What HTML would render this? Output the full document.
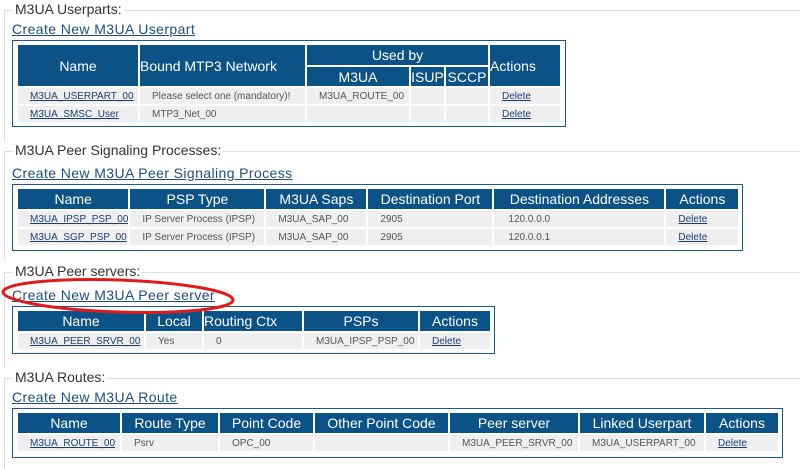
<!DOCTYPE html><html><head><style>
body{margin:0;width:800px;height:467px;background:#fff;position:relative;overflow:hidden;font-family:"Liberation Sans",sans-serif}
.fs{position:absolute;border-top:1px solid #ddd;border-left:1px solid #ddd;left:4px}
.lg{position:absolute;left:13px;font-size:14px;color:#333;background:#fff;padding:0 2px}
.cr{position:absolute;left:12px;font-size:14px;letter-spacing:0.4px;color:#1c4e86;text-decoration:underline}
.box{position:absolute;left:12px;border:1px solid #1b5a8e}
table{position:absolute;left:3px;top:2px;border-spacing:2px;table-layout:fixed}
th{background:#0b5287;color:#fff;font-weight:normal;font-size:14px;padding:0;white-space:nowrap;overflow:hidden}
td{background:#efefef;font-size:10px;color:#555;padding:0 0 0 12px;white-space:nowrap;overflow:hidden;height:16px}
td a{color:#1c3f70;text-decoration:underline}
</style></head><body>
<div class="fs" style="top:10px;width:796px;height:130px"></div><div class="lg" style="top:1px">M3UA Userparts:</div>
<div class="cr" style="top:21px">Create New M3UA Userpart</div>
<div class="box" style="top:40px;width:552px;height:85px"><table>
<col style="width:120px"><col style="width:165px"><col style="width:102px"><col style="width:33px"><col style="width:42px"><col style="width:70px">
<tr style="height:20px"><th rowspan="2">Name</th><th rowspan="2" style="text-align:left">Bound MTP3 Network</th><th colspan="3">Used by</th><th rowspan="2" style="text-align:left">Actions</th></tr>
<tr style="height:19px"><th>M3UA</th><th>ISUP</th><th>SCCP</th></tr>
<tr><td><a>M3UA_USERPART_00</a></td><td>Please select one (mandatory)!</td><td>M3UA_ROUTE_00</td><td></td><td></td><td><a>Delete</a></td></tr>
<tr><td><a>M3UA_SMSC_User</a></td><td>MTP3_Net_00</td><td></td><td></td><td></td><td><a>Delete</a></td></tr></table></div>

<div class="fs" style="top:151px;width:796px;height:108px"></div><div class="lg" style="top:142px">M3UA Peer Signaling Processes:</div>
<div class="cr" style="top:165px">Create New M3UA Peer Signaling Process</div>
<div class="box" style="top:184px;width:729px;height:65px"><table>
<col style="width:110px"><col style="width:134px"><col style="width:100px"><col style="width:124px"><col style="width:170px"><col style="width:72px">
<tr style="height:20px"><th>Name</th><th>PSP Type</th><th>M3UA Saps</th><th>Destination Port</th><th>Destination Addresses</th><th>Actions</th></tr>
<tr><td><a>M3UA_IPSP_PSP_00</a></td><td>IP Server Process (IPSP)</td><td>M3UA_SAP_00</td><td>2905</td><td style="padding-left:14px">120.0.0.0</td><td><a>Delete</a></td></tr>
<tr><td><a>M3UA_SGP_PSP_00</a></td><td>IP Server Process (IPSP)</td><td>M3UA_SAP_00</td><td>2905</td><td style="padding-left:14px">120.0.0.1</td><td><a>Delete</a></td></tr></table></div>

<div class="fs" style="top:272px;width:796px;height:95px"></div><div class="lg" style="top:263px">M3UA Peer servers:</div>
<div class="cr" style="top:287px">Create New M3UA Peer server</div>
<div class="box" style="top:306px;width:481px;height:46px"><table>
<col style="width:126px"><col style="width:56px"><col style="width:98px"><col style="width:114px"><col style="width:70px">
<tr style="height:20px"><th>Name</th><th>Local</th><th style="text-align:left">Routing Ctx</th><th>PSPs</th><th>Actions</th></tr>
<tr><td><a>M3UA_PEER_SRVR_00</a></td><td>Yes</td><td>0</td><td>M3UA_IPSP_PSP_00</td><td><a>Delete</a></td></tr></table></div>
<svg style="position:absolute;left:0;top:274px" width="240" height="46"><ellipse cx="118" cy="22" rx="115" ry="16" fill="none" stroke="#e01b1b" stroke-width="3" transform="rotate(2 118 22)"/></svg>

<div class="fs" style="top:378px;width:796px;height:90px"></div><div class="lg" style="top:369px">M3UA Routes:</div>
<div class="cr" style="top:389px">Create New M3UA Route</div>
<div class="box" style="top:408px;width:769px;height:48px"><table>
<col style="width:102px"><col style="width:96px"><col style="width:93px"><col style="width:133px"><col style="width:128px"><col style="width:124px"><col style="width:72px">
<tr style="height:20px"><th>Name</th><th>Route Type</th><th>Point Code</th><th>Other Point Code</th><th>Peer server</th><th>Linked Userpart</th><th>Actions</th></tr>
<tr><td><a>M3UA_ROUTE_00</a></td><td>Psrv</td><td>OPC_00</td><td></td><td>M3UA_PEER_SRVR_00</td><td>M3UA_USERPART_00</td><td><a>Delete</a></td></tr></table></div>
</body></html>
